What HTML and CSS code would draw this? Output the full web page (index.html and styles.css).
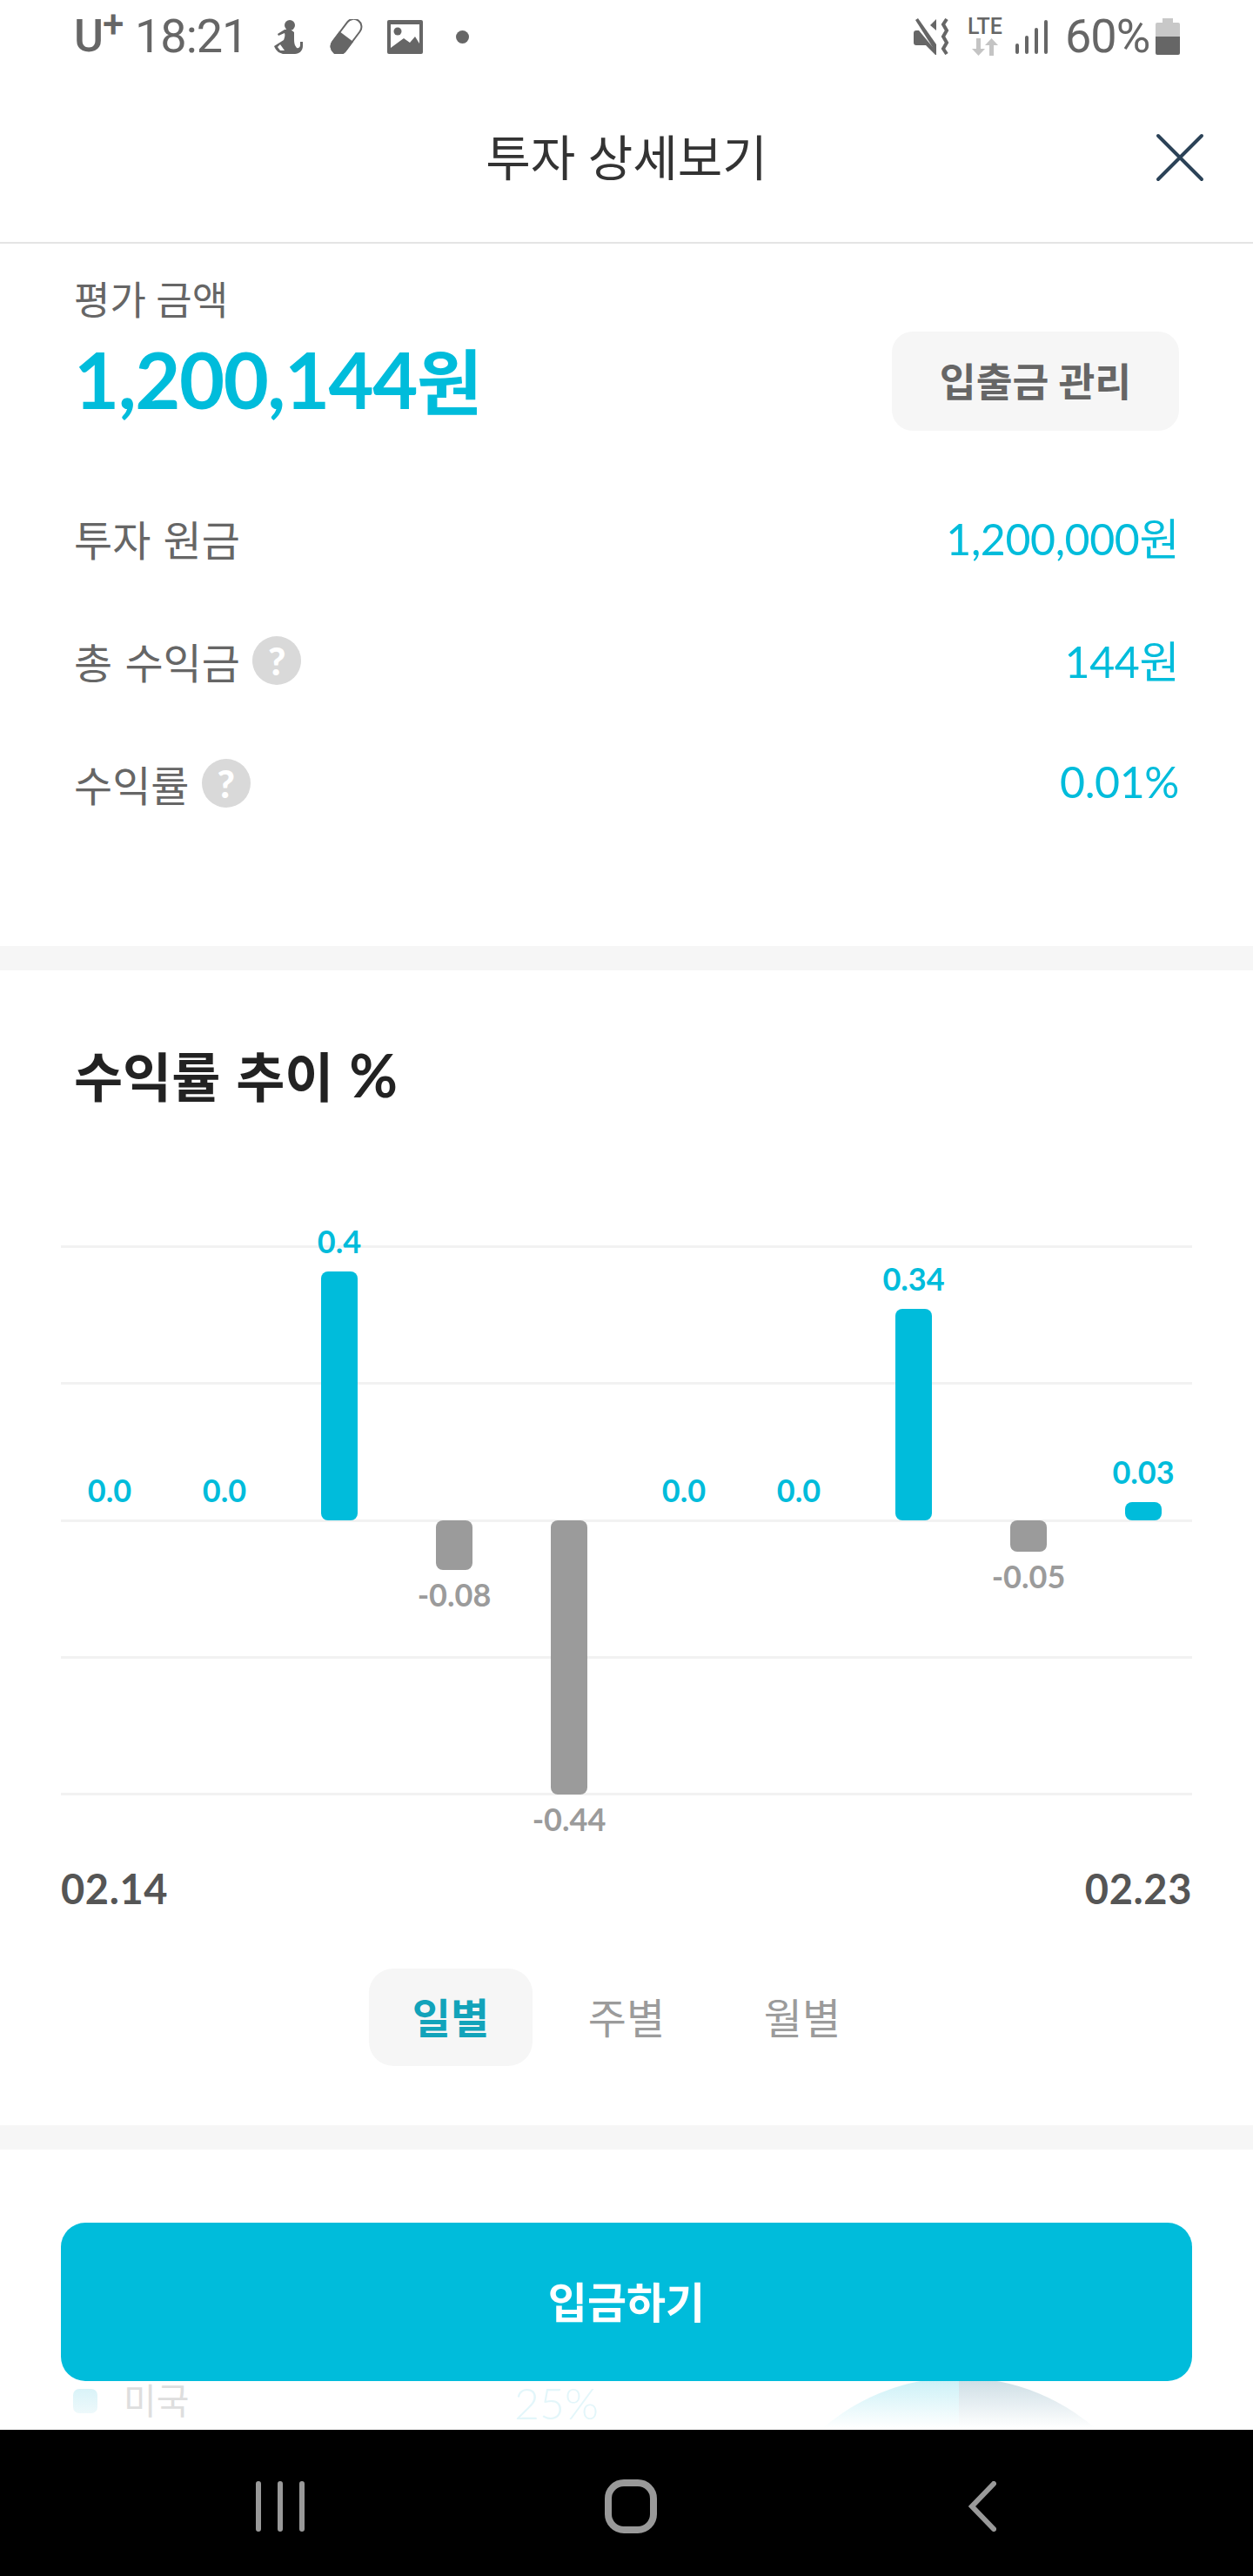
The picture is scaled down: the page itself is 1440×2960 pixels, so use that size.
FILE: index.html
```html
<!DOCTYPE html>
<html lang="ko">
<head>
  <meta charset="UTF-8">
  <meta name="viewport" content="width=device-width, initial-scale=1.0">
  <title>투자 상세보기</title>
  <link rel="stylesheet" href="styles.css">
</head>
<body>
  <div class="status">
    <div class="status-left">
      <span class="carrier">U<sup>+</sup></span>
      <span class="clock">18:21</span>
      <svg class="ic-person" viewBox="0 0 35 39"><ellipse cx="19" cy="6" rx="6" ry="6"/><path d="M13 11L5 16l1 2 7-3c1 3 0 5-1 8L1 30c1 3 3 5 5 7l5 2h14c5 0 9-4 9-9v-5h-3v4c0 2-2 4-4 3l-2-3c-1-3-1-5-1-8V14l-4-3z"/><path class="cut" d="M8 28l5 7H8l-3-4z"/></svg>
      <svg class="ic-pill" viewBox="0 0 40 40"><g transform="rotate(-53 20 20)"><rect x="-3" y="11" width="46" height="18" rx="9" fill="#fff" stroke="#666" stroke-width="2"/><path d="M20 10H6a10 10 0 0 0 0 20H20z"/></g></svg>
      <svg class="ic-image" viewBox="0 0 41 39"><rect width="41" height="39" rx="2"/><path class="cut" d="M4 5h33v22l-5-8-6 7-7-5-15 11z"/><circle cx="12" cy="13" r="4.500"/></svg>
      <span class="dot"></span>
    </div>
    <div class="status-right">
      <svg class="ic-mute" viewBox="0 0 42 42"><path d="M0 17c0-2 1-3 3-3h3L26 38v4h-1L14 31H3c-2 0-3-1-3-3z"/><path d="M2 2l3-2 21 30v10z"/><path d="M19 8l7-7v13z"/><path class="wave" d="M38 1l-4 6 4 7-4 7 4 7-4 7 4 6"/></svg>
      <div class="lte">
        <span>LTE</span>
        <svg viewBox="0 0 32 20"><path d="M6 0h5v12h5L8.500 20 1 12h5zM21 20h5V8h5L23.500 0 16 8h5z"/></svg>
      </div>
      <svg class="ic-signal" viewBox="0 0 37 39"><rect y="27" width="4" height="12" rx="2"/><rect x="11" y="18" width="4" height="21" rx="2"/><rect x="22" y="9" width="4" height="30" rx="2"/><rect x="33" y="0" width="4" height="39" rx="2"/></svg>
      <span class="percent">60%</span>
      <div class="battery"><i class="battery-cap"></i><i class="battery-empty"></i><i class="battery-level"></i></div>
    </div>
  </div>

  <header class="nav">
    <h1 class="nav-title">투자 상세보기</h1>
    <svg class="ic-close" viewBox="0 0 56 56"><path d="M3 3l50 50M53 3L3 53"/></svg>
  </header>

  <section class="summary">
    <p class="summary-label">평가 금액</p>
    <div class="summary-head">
      <strong class="amount">1,200,144<span class="won">원</span></strong>
      <button class="manage">입출금 관리</button>
    </div>
    <div class="row"><span class="row-name">투자 원금</span><span class="row-value">1,200,000원</span></div>
    <div class="row"><span class="row-name">총 수익금 <i class="help">?</i></span><span class="row-value">144원</span></div>
    <div class="row"><span class="row-name">수익률 <i class="help">?</i></span><span class="row-value">0.01%</span></div>
  </section>

  <div class="band"></div>

  <section class="trend">
    <h2 class="trend-title">수익률 추이 <span class="pct">%</span></h2>
    <div class="plot">
      <div class="grid"><i></i><i></i><i></i><i></i><i></i></div>
      <div class="cols">
        <div class="col"><div class="up"><span class="val">0.0</span></div><div class="down"></div></div>
        <div class="col"><div class="up"><span class="val">0.0</span></div><div class="down"></div></div>
        <div class="col"><div class="up"><span class="val">0.4</span><i class="bar" style="height:286px"></i></div><div class="down"></div></div>
        <div class="col"><div class="up"></div><div class="down"><i class="bar" style="height:57px"></i><span class="val">-0.08</span></div></div>
        <div class="col"><div class="up"></div><div class="down"><i class="bar" style="height:315px"></i><span class="val">-0.44</span></div></div>
        <div class="col"><div class="up"><span class="val">0.0</span></div><div class="down"></div></div>
        <div class="col"><div class="up"><span class="val">0.0</span></div><div class="down"></div></div>
        <div class="col"><div class="up"><span class="val">0.34</span><i class="bar" style="height:243px"></i></div><div class="down"></div></div>
        <div class="col"><div class="up"></div><div class="down"><i class="bar" style="height:36px"></i><span class="val">-0.05</span></div></div>
        <div class="col"><div class="up"><span class="val">0.03</span><i class="bar" style="height:21px"></i></div><div class="down"></div></div>
      </div>
    </div>
    <div class="dates"><span>02.14</span><span>02.23</span></div>
    <div class="tabs">
      <span class="tab tab-on">일별</span>
      <span class="tab">주별</span>
      <span class="tab">월별</span>
    </div>
  </section>

  <div class="band"></div>

  <section class="bottom">
    <button class="deposit">입금하기</button>
    <div class="legend">
      <i class="legend-dot"></i>
      <span class="legend-name">미국</span>
      <span class="legend-value">25%</span>
      <svg class="donut" viewBox="0 0 480 56">
        <defs>
          <linearGradient id="fadeCyan" gradientUnits="userSpaceOnUse" x1="0" y1="0" x2="0" y2="54"><stop offset="0" stop-color="#cdf1f7"/><stop offset="1" stop-color="#fff"/></linearGradient>
          <linearGradient id="fadeNavy" gradientUnits="userSpaceOnUse" x1="0" y1="0" x2="0" y2="54"><stop offset="0" stop-color="#cfdfe6"/><stop offset="1" stop-color="#fff"/></linearGradient>
        </defs>
        <path d="M240 -4A240 240 0 0 0 0 236H240z" fill="url(#fadeCyan)"/>
        <path d="M240 -4A240 240 0 0 1 480 236H240z" fill="url(#fadeNavy)"/>
      </svg>
    </div>
  </section>

  <div class="softkeys">
    <svg class="ic-recent" viewBox="0 0 56 58"><path d="M3 3v52M28 3v52M53 3v52"/></svg>
    <svg class="ic-home" viewBox="0 0 60 62"><rect x="4" y="4" width="52" height="54" rx="18"/></svg>
    <svg class="ic-back" viewBox="0 0 32 58"><path d="M29 3L4 29l25 26"/></svg>
  </div>
</body>
</html>
```

FILE: styles.css
```css
* {
  box-sizing: border-box;
}
body {
  margin: 0;
  width: 1440px;
  background: #fff;
  font-family: Lato, "Noto Sans CJK KR", sans-serif;
  color: #666;
}
h1, h2, p {
  margin: 0;
}
button {
  border: 0;
  font-family: inherit;
}

/* status bar */
.status {
  height: 84px;
  padding: 20px 84px 0 85px;
  display: flex;
  justify-content: space-between;
  align-items: flex-start;
  font-family: Roboto, sans-serif;
}
.status svg {
  fill: #666;
  display: block;
}
.status .cut {
  fill: #fff;
}
.status-left, .status-right {
  display: flex;
  align-items: center;
  height: 44px;
}
.carrier {
  width: 70px;
  font-size: 52px;
  font-weight: 500;
  line-height: 44px;
}
.carrier sup {
  font-size: 44px;
  line-height: 0;
  vertical-align: 16px;
  margin-left: -1px;
}
.clock, .percent {
  font-size: 54px;
  line-height: 44px;
  letter-spacing: -1px;
}
.clock {
  width: 159px;
}
.ic-person { width: 35px; height: 39px; }
.ic-pill { width: 40px; height: 40px; margin-left: 29px; }
.ic-image { width: 41px; height: 39px; margin-left: 27px; }
.dot {
  width: 15px;
  height: 15px;
  margin-left: 38px;
  border-radius: 50%;
  background: #666;
}
.ic-mute { width: 42px; height: 42px; }
.status .wave {
  fill: none;
  stroke: #666;
  stroke-width: 4;
}
.lte {
  width: 41px;
  margin-left: 20px;
  font-size: 25px;
  font-weight: 500;
  line-height: 20px;
}
.lte span {
  display: block;
}
.status .lte svg {
  width: 32px;
  height: 20px;
  margin: 3px 0 0 4px;
  fill: #c4c4c4;
}
.ic-signal { width: 37px; height: 39px; margin-left: 14px; }
.percent {
  width: 95px;
  margin-left: 20px;
}
.battery {
  width: 28px;
  margin-left: 9px;
  display: flex;
  flex-direction: column;
  align-items: center;
}
.battery i {
  display: block;
}
.battery-cap {
  width: 12px;
  height: 5px;
  background: #c8c8c8;
}
.battery-empty {
  width: 28px;
  height: 16px;
  border-radius: 2px 2px 0 0;
  background: #c8c8c8;
}
.battery-level {
  width: 28px;
  height: 21px;
  border-radius: 0 0 2px 2px;
  background: #666;
}

/* title bar */
.nav {
  height: 196px;
  padding: 0 56px 0 0;
  display: flex;
  justify-content: flex-end;
  align-items: center;
  position: relative;
  border-bottom: 2px solid #e4e4e4;
}
.nav-title {
  position: absolute;
  left: 0;
  right: 0;
  text-align: center;
  font-size: 56px;
  font-weight: 400;
  line-height: 80px;
  color: #333;
}
.ic-close {
  width: 56px;
  height: 56px;
  fill: none;
  stroke: #2b4257;
  stroke-width: 4;
  stroke-linecap: round;
}

/* summary */
.summary {
  padding: 35px 85px 117px;
}
.summary-label {
  font-size: 45px;
  line-height: 60px;
}
.summary-head {
  height: 114px;
  margin: 6px 0 52px;
  display: flex;
  justify-content: space-between;
  align-items: center;
}
.amount {
  padding-bottom: 3px;
  font-size: 90px;
  line-height: 108px;
  font-weight: 700;
  letter-spacing: -1.500px;
  color: #00bcdb;
}
.won {
  font-size: 82px;
}
.manage {
  width: 330px;
  height: 114px;
  padding: 0 0 4px;
  border-radius: 24px;
  background: #f6f6f6;
  font-size: 45.500px;
  font-weight: 700;
  color: #666;
}
.row {
  height: 141px;
  display: flex;
  justify-content: space-between;
  align-items: center;
  font-size: 48px;
}
.row-name {
  display: flex;
  align-items: center;
  white-space: pre;
  word-spacing: 2px;
}
.row-value {
  padding-bottom: 3px;
  font-size: 50px;
  letter-spacing: -0.400px;
  color: #00bcdb;
}
.help {
  width: 56px;
  height: 56px;
  border-radius: 50%;
  background: #d9d9d9;
  display: flex;
  justify-content: center;
  align-items: center;
  font-size: 44px;
  font-style: normal;
  font-weight: 900;
  line-height: 56px;
  color: #fff;
}

.band {
  height: 28px;
  background: #f6f6f6;
}

/* chart */
.trend {
  padding: 83px 70px 68px;
}
.trend-title {
  height: 80px;
  margin-left: 15px;
  font-size: 61px;
  font-weight: 700;
  line-height: 80px;
  word-spacing: 3px;
  color: #222;
}
.pct {
  font-size: 68px;
  line-height: 0;
}
.plot {
  height: 632px;
  margin-top: 153px;
  position: relative;
}
.grid {
  position: absolute;
  left: 0;
  right: 0;
  top: 0;
  bottom: 0;
  display: flex;
  flex-direction: column;
  justify-content: space-between;
}
.grid i {
  display: block;
  height: 3px;
  background: #f2f2f2;
}
.cols {
  margin: 0 -10px;
  display: grid;
  grid-template-columns: repeat(10, 132px);
  position: relative;
}
.up, .down {
  height: 316px;
  display: flex;
  flex-direction: column;
  align-items: center;
}
.up {
  justify-content: flex-end;
}
.bar {
  display: block;
  flex: none;
  width: 42px;
  border-radius: 8px;
  background: #00bcdb;
}
.val {
  flex: none;
  font-size: 36px;
  font-weight: 700;
  line-height: 36px;
  color: #00bcdb;
}
.up .val {
  margin-bottom: 17px;
}
.down .bar {
  background: #9b9b9b;
}
.down .val {
  margin-top: 10px;
  color: #9b9b9b;
}
.dates {
  margin-top: 84px;
  display: flex;
  justify-content: space-between;
  font-size: 47px;
  font-weight: 700;
  letter-spacing: 0.600px;
  line-height: 46px;
  color: #555;
}
.tabs {
  margin-top: 69px;
  display: flex;
  justify-content: center;
  gap: 14px;
}
.tab {
  width: 188px;
  height: 112px;
  padding-bottom: 5px;
  border-radius: 28px;
  display: flex;
  justify-content: center;
  align-items: center;
  font-size: 48px;
  color: #9b9b9b;
}
.tab-on {
  background: #f6f6f6;
  font-weight: 700;
  color: #12a3ba;
}

/* bottom */
.bottom {
  padding-top: 84px;
}
.deposit {
  display: block;
  width: 1300px;
  height: 182px;
  margin: 0 auto;
  padding: 0 0 5px;
  border-radius: 28px;
  background: #00bcdb;
  font-size: 49px;
  font-weight: 700;
  color: #fff;
}
.legend {
  height: 56px;
  padding-left: 84px;
  display: flex;
  align-items: flex-start;
}
.legend-dot {
  width: 28px;
  height: 28px;
  margin-top: 9px;
  border-radius: 7px;
  background: linear-gradient(#d9f3f8, #eef9fb);
}
.legend-name {
  width: 449px;
  margin-left: 30px;
  font-size: 41px;
  line-height: 46px;
  color: #dedede;
}
.legend-value {
  width: 271px;
  font-size: 50px;
  font-weight: 300;
  line-height: 50px;
  color: #e3f6fa;
}
.donut {
  display: block;
  width: 480px;
  height: 56px;
  flex: none;
}

/* android keys */
.softkeys {
  height: 168px;
  background: #000;
  position: relative;
}
.softkeys svg {
  position: absolute;
  fill: none;
  stroke: #999;
  stroke-linecap: round;
}
.ic-recent { left: 294px; top: 59px; width: 56px; height: 58px; stroke-width: 6; }
.ic-home { left: 695px; top: 57px; width: 60px; height: 62px; stroke-width: 8; }
.ic-back { left: 1113px; top: 59px; width: 32px; height: 58px; stroke-width: 6; }
```
